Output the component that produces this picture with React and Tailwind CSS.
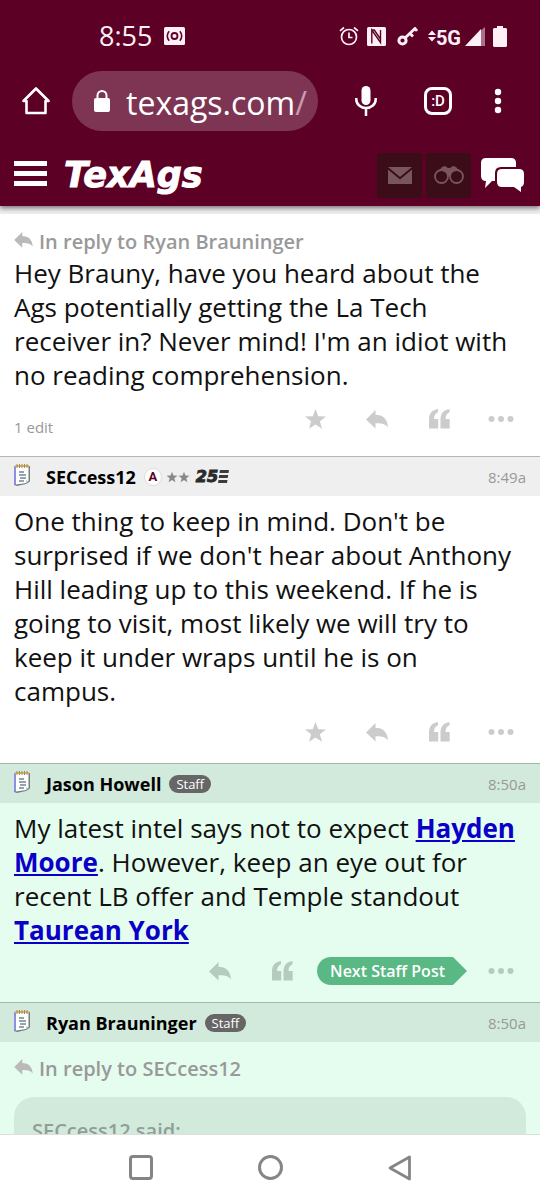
import { Fragment } from "react";

const posts = [
  {
    id: 1,
    replyTo: "Ryan Brauninger",
    body: [
      { text: "Hey Brauny, have you heard about the Ags potentially getting the La Tech receiver in? Never mind! I'm an idiot with no reading comprehension." },
    ],
    edits: "1 edit",
  },
  {
    id: 2,
    author: "SECcess12",
    time: "8:49a",
    member: true,
    body: [
      { text: "One thing to keep in mind. Don't be surprised if we don't hear about Anthony Hill leading up to this weekend. If he is going to visit, most likely we will try to keep it under wraps until he is on campus." },
    ],
  },
  {
    id: 3,
    author: "Jason Howell",
    time: "8:50a",
    staff: true,
    body: [
      { text: "My latest intel says not to expect " },
      { text: "Hayden Moore", href: "#hayden-moore" },
      { text: ". However, keep an eye out for recent LB offer and Temple standout " },
      { text: "Taurean York", href: "#taurean-york" },
    ],
  },
];

function StarIcon({ className }) {
  return (
    <svg viewBox="0 0 24 23" className={className} fill="currentColor" aria-hidden="true">
      <path d="M12 1l2.9 7.6 8.1.3-6.4 5 2.2 7.9L12 17.3l-6.8 4.5 2.2-7.9L1 8.9l8.1-.3z" />
    </svg>
  );
}

function ReplyIcon({ className }) {
  return (
    <svg viewBox="0 0 22 19" className={className} fill="currentColor" aria-hidden="true">
      <path d="M0 9.5 9.5 0v4.7C17 4.7 21.5 9 22 17.3 19 13.6 15.5 13 9.5 13.2v5.4z" />
    </svg>
  );
}

function QuoteIcon({ className }) {
  return (
    <svg viewBox="0 0 21 20" className={className} fill="currentColor" aria-hidden="true">
      <path d="M9 0v3.200C6.500 4 5 6.500 5 10h4.200v9.500H0V10C0 4.500 3 .8 9 0z" />
      <path d="M20.500 0v3.200c-2.500.8-4 3.300-4 6.800h4.200v9.500h-9.200V10C11.500 4.500 14.500.8 20.500 0z" />
    </svg>
  );
}

function DotsIcon({ className }) {
  return (
    <svg viewBox="0 0 26 6" className={className} fill="currentColor" aria-hidden="true">
      <circle cx="3.5" cy="3" r="3" />
      <circle cx="13" cy="3" r="3" />
      <circle cx="22.5" cy="3" r="3" />
    </svg>
  );
}

function NotepadIcon() {
  return (
    <svg viewBox="0 0 18 24" className="h-6 w-[18px]" aria-hidden="true">
      <path d="M2 3h15v15.500l-4 2.500-9 2-3-1z" fill="#777d80" />
      <path d="M1 3h2v19l-2-1z" fill="#8d8fe0" />
      <path d="M3 3h12.500v15l-2.500 2-10 1.500z" fill="#fff" />
      <path d="M13 20v-2.500l2.500.5z" fill="#b9bdbd" />
      <path d="M2 2h14v2H2z" fill="#d9b56a" />
      <path d="M4 1v4M6.500 1v4M9 1v4M11.500 1v4M14 1v4" stroke="#a38c5c" />
      <path d="M6 9h5M6 12h7M7 15h6M6 18h5" stroke="#6f8694" strokeWidth="1.3" />
    </svg>
  );
}

function StatusBar() {
  return (
    <div className="flex h-[66px] items-center justify-between pt-[6px] pr-[33px] pl-[99px] text-[#fff0f6]">
      <div className="flex items-center gap-3">
        <span className="font-['Open_Sans',sans-serif] text-[27px] leading-8">8:55</span>
        <svg viewBox="0 0 21 18" className="h-[18px] w-[21px]" aria-hidden="true">
          <rect width="21" height="18" rx="1.5" fill="currentColor" />
          <circle cx="10.5" cy="9" r="3" fill="none" stroke="#5c0025" strokeWidth="1.8" />
          <path d="M5.200 4.200a7 7 0 0 0 0 9.600M15.800 4.200a7 7 0 0 1 0 9.600" fill="none" stroke="#5c0025" strokeWidth="1.6" />
        </svg>
      </div>
      <div className="flex items-center">
        <svg viewBox="0 0 20 20" className="h-5 w-5" fill="none" stroke="currentColor" strokeWidth="1.7" aria-hidden="true">
          <circle cx="10" cy="11" r="7.5" />
          <path d="M10 6.500v5h3.500M1 4.800 5 1.500M19 4.800l-4-3.300" />
        </svg>
        <svg viewBox="0 0 19 19" className="ml-2 h-[19px] w-[19px]" aria-hidden="true">
          <rect width="19" height="19" rx="1.5" fill="currentColor" />
          <path d="M4.800 16.500V3L13.500 15.500V3M4.800 3h2.500l6.200 9" fill="none" stroke="#5c0025" strokeWidth="1.4" />
        </svg>
        <svg viewBox="0 0 21 19" className="ml-[11px] h-[19px] w-[21px]" fill="none" stroke="currentColor" strokeWidth="3" aria-hidden="true">
          <circle cx="5.5" cy="13.5" r="3.6" />
          <path d="M8 11 18 1.500l2 2.500M13 6.500l3 3" strokeWidth="2.8" />
        </svg>
        <div className="ml-[10px] flex items-center">
          <svg viewBox="0 0 8 12" className="h-3 w-2" fill="currentColor" aria-hidden="true">
            <path d="M0 5l4-4.500L8 5zM0 7h8l-4 4.500z" />
          </svg>
          <span className="pt-1 font-['Roboto',sans-serif] text-[20px] leading-6 font-bold">5G</span>
        </div>
        <svg viewBox="0 0 20 19" className="ml-1 h-[19px] w-5" aria-hidden="true">
          <path d="M15 19V4l5-4v19z" fill="#a9718c" />
          <path d="M0 19 16 2v17z" fill="currentColor" />
        </svg>
        <svg viewBox="0 0 14 21" className="ml-2 h-[21px] w-[14px]" fill="currentColor" aria-hidden="true">
          <path d="M4 0h6v2h3l1 1v17l-1 1H1l-1-1V3l1-1h3z" />
        </svg>
      </div>
    </div>
  );
}

function BrowserBar() {
  return (
    <div className="flex h-[70px] items-center pr-[39px] pl-[22px] text-white">
      <button type="button" aria-label="Home">
        <svg viewBox="0 0 28 28" className="h-7 w-7" fill="none" stroke="currentColor" strokeWidth="2.6" strokeLinejoin="round" aria-hidden="true">
          <path d="M4.500 14h-3L14 1.500 26.500 14h-3v12h-19z" />
        </svg>
      </button>
      <button
        type="button"
        className="ml-[22px] flex h-[60px] flex-1 items-center rounded-full bg-[#7e3553] pl-[22px] text-left"
      >
        <svg viewBox="0 0 16 22" className="h-[22px] w-4" aria-hidden="true">
          <rect y="8" width="16" height="14" rx="2" fill="currentColor" />
          <path d="M3.500 9V5.500a4.500 4.500 0 0 1 9 0V9" fill="none" stroke="currentColor" strokeWidth="2" />
        </svg>
        <span className="ml-4 pt-1 font-['Open_Sans',sans-serif] text-[32px] leading-[44px]">
          texags.com<span className="text-[#c79bb0]">/</span>
        </span>
      </button>
      <button type="button" aria-label="Voice search" className="ml-[37px]">
        <svg viewBox="0 0 22 30" className="h-[30px] w-[22px]" aria-hidden="true">
          <rect x="6.5" width="9" height="19" rx="4.5" fill="currentColor" />
          <path d="M1.300 12v1.500a9.700 8.500 0 0 0 19.400 0V12M11 22v8" fill="none" stroke="currentColor" strokeWidth="2.5" />
        </svg>
      </button>
      <button
        type="button"
        aria-label="Tabs"
        className="ml-[47px] flex h-7 w-7 items-center justify-center rounded-lg border-[3px] border-white font-['Roboto',sans-serif] text-[15px] leading-none font-medium"
      >
        :D
      </button>
      <button type="button" aria-label="Browser menu" className="ml-[43px]">
        <svg viewBox="0 0 6 26" className="h-[26px] w-[6px] overflow-visible" fill="currentColor" aria-hidden="true">
          <circle cx="3" cy="4" r="3.2" />
          <circle cx="3" cy="13" r="3.2" />
          <circle cx="3" cy="22" r="3.2" />
        </svg>
      </button>
    </div>
  );
}

function SiteHeader() {
  return (
    <div className="flex h-[70px] items-center pt-2 pr-4 pl-[14px] text-white">
      <button type="button" aria-label="Menu" className="flex flex-col gap-[5px] pb-1">
        <span className="h-[5px] w-[33px] bg-white"></span>
        <span className="h-[5px] w-[33px] bg-white"></span>
        <span className="h-[5px] w-[33px] bg-white"></span>
      </button>
      <a
        href="#home"
        className="ml-[17px] flex-1 font-['DejaVu_Sans',sans-serif] text-[35px] leading-9 font-bold italic [-webkit-text-stroke:1px_white]"
      >
        TexAgs
      </a>
      <button type="button" aria-label="Messages" className="flex h-[45px] w-[45px] items-center justify-center bg-[#3b0d18]">
        <svg viewBox="0 0 24 17" className="h-[17px] w-6" fill="#795560" aria-hidden="true">
          <path d="M0 0h24L12 10z" />
          <path d="M0 2.500 12 12.500 24 2.500V17H0z" />
        </svg>
      </button>
      <button type="button" aria-label="Watched topics" className="ml-1 flex h-[45px] w-[45px] items-center justify-center bg-[#3b0d18]">
        <svg viewBox="0 0 30 18" className="h-[18px] w-[30px]" aria-hidden="true">
          <path d="M2 8 8 1l3-1 3 2h2l3-2 3 1 6 7-5-2-5 2-2 2h-2l-2-2-5-2z" fill="#795560" />
          <circle cx="7.5" cy="10.5" r="6.5" fill="#3b0d18" stroke="#795560" strokeWidth="1.8" />
          <circle cx="22.5" cy="10.5" r="6.5" fill="#3b0d18" stroke="#795560" strokeWidth="1.8" />
        </svg>
      </button>
      <button type="button" aria-label="Forums" className="ml-[10px]">
        <svg viewBox="0 0 43 35" className="h-[35px] w-[43px]" fill="currentColor" aria-hidden="true">
          <path d="M5 0h25q5 0 5 5v4H20q-6 0-6 6v8h-3l-7 7 1-7q-5 0-5-5V5q0-5 5-5z" />
          <path d="M21 11h17q5 0 5 5v8q0 4-3 5v5l-7-5H21q-5 0-5-5v-8q0-5 5-5z" />
        </svg>
      </button>
    </div>
  );
}

function InReplyTo({ name }) {
  return (
    <p className="flex items-center gap-[6px] text-[20px] leading-7 font-semibold text-[#999999]">
      <ReplyIcon className="mb-1 h-4 w-[19px] text-[#bababa]" />
      In reply to {name}
    </p>
  );
}

function PostHeader({ author, time, staff, member }) {
  return (
    <header
      className={`flex h-10 items-center border-t pr-[14px] pl-[13px] ${
        staff ? "border-[#9fb8a9] bg-[#d2eadc]" : "border-[#b5b5b5] bg-[#efefef]"
      }`}
    >
      <div className="mb-1">
        <NotepadIcon />
      </div>
      <h2 className="ml-[15px] text-[18px] leading-6 font-bold text-black">{author}</h2>
      {staff && (
        <span className="ml-2 rounded-full bg-[#666666] px-[7px] text-[13px] leading-[18px] text-white">Staff</span>
      )}
      {member && (
        <div className="ml-2 flex items-center text-[#888888]">
          <span className="flex h-[18px] w-[18px] items-center justify-center rounded-full border border-[#dddddd] bg-white font-['Roboto',sans-serif] text-[13px] leading-none font-bold text-[#5c0025]">
            A
          </span>
          <StarIcon className="ml-1 h-3 w-3" />
          <StarIcon className="h-3 w-3" />
          <span className="ml-[6px] font-['DejaVu_Sans',sans-serif] text-[16px] leading-5 font-bold text-[#2b2b2b] italic [-webkit-text-stroke:1px_#2b2b2b]">
            25
          </span>
          <svg viewBox="0 0 11 13" className="h-[13px] w-[11px]" fill="#3b3b3b" aria-hidden="true">
            <path d="M2 0h9l-.5 3h-9zM1.200 5h9l-.5 3h-9zM.5 10h9L9 13H0z" />
          </svg>
        </div>
      )}
      <time className="ml-auto text-[15px] leading-5 text-[#999999]">{time}</time>
    </header>
  );
}

function PostActions({ staff }) {
  const button = "flex h-8 w-[62px] items-center justify-center";
  return (
    <div className={`ml-auto flex h-12 items-center pr-2 ${staff ? "text-[#b5cbbf]" : "text-[#cccccc]"}`}>
      {!staff && (
        <button type="button" aria-label="Star" className={button}>
          <StarIcon className="h-[22px] w-[23px]" />
        </button>
      )}
      <button type="button" aria-label="Reply" className={button}>
        <ReplyIcon className="h-[19px] w-[22px]" />
      </button>
      <button type="button" aria-label="Quote" className={button}>
        <QuoteIcon className="h-5 w-[21px]" />
      </button>
      {staff && (
        <a
          href="#next-staff-post"
          className="mr-[3px] ml-1 h-7 rounded-l-full bg-[#5ab884] pr-[22px] pl-[13px] text-[16px] leading-7 font-semibold text-white [clip-path:polygon(0_0,calc(100%-14px)_0,100%_50%,calc(100%-14px)_100%,0_100%)]"
        >
          Next Staff Post
        </a>
      )}
      <button type="button" aria-label="More" className={button}>
        <DotsIcon className="h-[6px] w-[26px]" />
      </button>
    </div>
  );
}

function Post({ post }) {
  return (
    <article className={post.staff ? "bg-[#e5fdee]" : "bg-white"}>
      {post.author && <PostHeader {...post} />}
      <div className={`px-[14px] ${post.replyTo ? "pt-[14px]" : "pt-2"}`}>
        {post.replyTo && <InReplyTo name={post.replyTo} />}
        <p className="text-[26px] leading-[34px] text-[#111111]">
          {post.body.map((part, i) => (
            <Fragment key={i}>
              {part.href ? (
                <a href={part.href} className="font-bold text-[#0a00c8] underline">
                  {part.text}
                </a>
              ) : (
                part.text
              )}
            </Fragment>
          ))}
        </p>
      </div>
      <div className={`flex ${post.edits ? "pt-[3px] pb-[13px]" : "pb-[7px]"}`}>
        {post.edits && <span className="self-end pl-[14px] text-[15px] leading-8 text-[#999999]">{post.edits}</span>}
        <PostActions staff={post.staff} />
      </div>
    </article>
  );
}

function NavigationBar() {
  return (
    <nav className="flex h-[66px] shrink-0 items-center justify-center gap-[105px] border-t border-[#dddddd] bg-white text-[#858585]">
      <button type="button" aria-label="Recent apps" className="h-[25px] w-6 rounded border-[3px] border-[#858585]"></button>
      <button type="button" aria-label="Home screen" className="h-[25px] w-[25px] rounded-full border-[3px] border-[#858585]"></button>
      <button type="button" aria-label="Back">
        <svg viewBox="0 0 24 26" className="h-[26px] w-6" fill="none" stroke="currentColor" strokeWidth="2.8" strokeLinejoin="round" aria-hidden="true">
          <path d="M2 13 21.500 2v22z" />
        </svg>
      </button>
    </nav>
  );
}

export default function App() {
  return (
    <div className="flex h-screen flex-col bg-white font-['Open_Sans',sans-serif]">
      <div className="relative shrink-0 bg-[#5c0025] shadow-[0_2px_5px_rgba(40,20,30,0.6)]">
        <StatusBar />
        <BrowserBar />
        <SiteHeader />
      </div>
      <main className="min-h-0 flex-1 overflow-hidden bg-[#e5fdee]">
        <div className="h-2 bg-[#efefef]"></div>
        {posts.map((post) => (
          <Post key={post.id} post={post} />
        ))}
        <article>
          <PostHeader author="Ryan Brauninger" time="8:50a" staff />
          <div className="px-[14px] pt-[13px]">
            <InReplyTo name="SECcess12" />
            <blockquote className="mt-[14px] rounded-[20px] bg-[#d2eadc] px-[18px] py-5 text-[20px] leading-7 font-semibold text-[#8f9f96]">
              SECcess12 said:
            </blockquote>
          </div>
        </article>
      </main>
      <NavigationBar />
    </div>
  );
}
